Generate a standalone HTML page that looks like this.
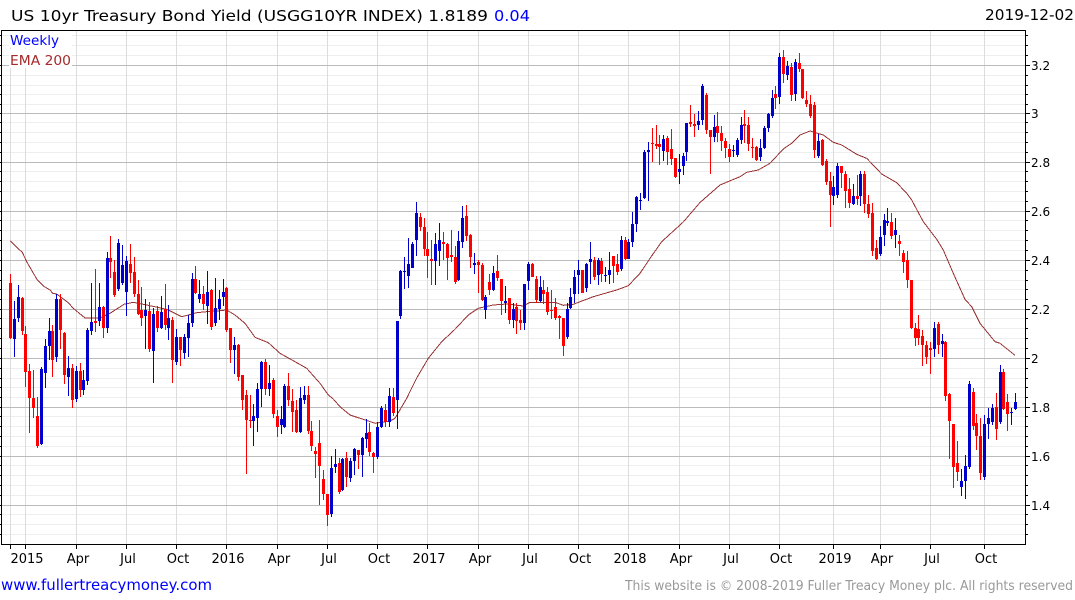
<!DOCTYPE html>
<html><head><meta charset="utf-8"><title>US 10yr Treasury Bond Yield</title>
<style>html,body{margin:0;padding:0;background:#fff}svg{display:block}text{font-family:"DejaVu Sans",sans-serif}</style></head>
<body>
<svg xmlns="http://www.w3.org/2000/svg" width="1075" height="600" viewBox="0 0 1075 600">
<rect width="1075" height="600" fill="#fff"/>
<g shape-rendering="crispEdges" fill="none" stroke-width="1">
<path stroke="#eee" d="M2 35.5H1025M2 45.5H1025M2 55.5H1025M2 75.5H1025M2 85.5H1025M2 94.5H1025M2 104.5H1025M2 122.5H1025M2 132.5H1025M2 142.5H1025M2 152.5H1025M2 171.5H1025M2 181.5H1025M2 191.5H1025M2 201.5H1025M2 220.5H1025M2 230.5H1025M2 240.5H1025M2 250.5H1025M2 270.5H1025M2 280.5H1025M2 289.5H1025M2 299.5H1025M2 318.5H1025M2 328.5H1025M2 338.5H1025M2 348.5H1025M2 368.5H1025M2 378.5H1025M2 387.5H1025M2 397.5H1025M2 416.5H1025M2 426.5H1025M2 436.5H1025M2 446.5H1025M2 465.5H1025M2 475.5H1025M2 485.5H1025M2 495.5H1025M2 514.5H1025M2 524.5H1025M2 534.5H1025"/>
<path stroke="#ddd" d="M10.5 31V544M25.5 31V544M76.5 31V544M126.5 31V544M176.5 31V544M226.5 31V544M277.5 31V544M327.5 31V544M377.5 31V544M427.5 31V544M478.5 31V544M528.5 31V544M578.5 31V544M628.5 31V544M679.5 31V544M729.5 31V544M779.5 31V544M833.5 31V544M880.5 31V544M930.5 31V544M984.5 31V544"/>
<path stroke="#bbb" d="M2 65.5H1025M2 113.5H1025M2 162.5H1025M2 211.5H1025M2 260.5H1025M2 309.5H1025M2 358.5H1025M2 407.5H1025M2 456.5H1025M2 505.5H1025"/>
</g>
<rect x="9" y="31" width="63" height="16.5" fill="#fff"/>
<rect x="9" y="49" width="63" height="19" fill="#fff"/>
<path fill="none" stroke="#993333" stroke-width="1" shape-rendering="crispEdges" d="M10.3 241L16.7 247.3L22.3 252.3L26.7 261.7L37.3 280L43.3 286L50 290L52.7 293.3L56.7 294L63.3 299L68.3 302.7L73.3 308.3L85 318L100 318L110 313.3L124 304.3L133.3 302.3L146.7 305L166.7 309.3L181.7 316.7L188.3 315L196.7 312.7L206.7 311.7L216.7 311L226.7 310L235 315L245 323.3L255 337.3L268.3 342.7L280 353.3L295 361.7L306.7 368.3L320 383.3L328.3 395L333.3 399L340 406.7L350 415L360 418.3L375 423.3L390 421L395 418.3L406.7 398.3L416.7 378L428.3 358.3L441.7 341.7L455 329.3L468.3 315L478.3 308.3L493.3 305L506.7 304L523.3 306L530 302.3L555 302.3L563.3 305.3L573.3 304.3L593.3 296.7L616.7 290L628.3 285.7L640 273.3L650 258.3L661.7 241.7L683.3 222L700 202.5L720 185L740 176.7L746.7 172.3L758.3 170L770 163.3L783.3 149L791.7 143.3L800 135L810 131L823.3 135L833.3 142.3L841.7 145L856.7 154.3L866.7 158.3L881.7 174L896.7 182.7L906.7 193.3L911.7 200L923.3 221.7L936.7 239.3L943.3 250L953.3 273.3L965 299.3L971.7 306.7L980 323.3L995 341.7L1000 343.3L1015 355.3"/>
<g shape-rendering="crispEdges" fill="none">
<path stroke="#ff0000" stroke-width="1" d="M10.5 274V339M22.5 297V335M25.5 326V387M29.5 364V433M33.5 370V418M37.5 397V448M52.5 325V377M60.5 294V349M64.5 332V384M72.5 364V408M80.5 363V397M95.5 269V332M103.5 306V338M110.5 236V278M114.5 260V297M130.5 244V283M134.5 257V297M138.5 280V315M141.5 287V326M149.5 302V352M157.5 306V332M165.5 284V330M172.5 317V383M180.5 337V366M195.5 266V294M203.5 286V310M211.5 289V330M226.5 287V332M230.5 328V363M238.5 344V381M242.5 375V410M246.5 390V474M250.5 395V428M265.5 359V395M273.5 378V418M277.5 410V437M288.5 373V406M292.5 389V432M296.5 400V433M308.5 386V434M311.5 421V451M315.5 447V478M319.5 420V505M323.5 470V500M327.5 494V526M339.5 458V494M346.5 452V487M358.5 450V469M369.5 423V456M373.5 452V473M385.5 404V427M393.5 388V416M420.5 213V231M424.5 218V256M427.5 232V278M431.5 240V285M443.5 232V260M447.5 243V280M451.5 230V262M455.5 246V284M466.5 205V241M470.5 234V268M478.5 260V293M482.5 263V301M489.5 274V295M497.5 255V281M501.5 279V315M509.5 298V324M516.5 303V334M520.5 310V330M532.5 263V277M536.5 276V303M543.5 280V304M547.5 287V315M551.5 290V319M555.5 298V320M559.5 315V339M563.5 318V356M582.5 270V293M594.5 257V280M601.5 258V282M613.5 256V283M617.5 254V275M625.5 237V260M652.5 128V162M656.5 125V149M659.5 135V165M667.5 136V165M671.5 129V165M675.5 158V178M690.5 105V127M694.5 114V137M706.5 93V134M710.5 130V174M717.5 112V142M721.5 126V151M725.5 138V158M729.5 144V162M744.5 110V143M748.5 117V151M752.5 138V158M756.5 146V161M775.5 86V109M783.5 50V83M791.5 63V101M799.5 53V72M802.5 69V99M806.5 91V107M810.5 95V118M814.5 102V158M822.5 139V166M826.5 159V185M830.5 172V227M841.5 166V188M845.5 171V208M849.5 178V208M857.5 175V205M864.5 171V213M868.5 195V218M872.5 203V256M876.5 240V260M891.5 213V239M899.5 235V256M903.5 250V273M907.5 251V288M911.5 280V329M915.5 323V346M918.5 315V345M922.5 330V366M926.5 341V364M930.5 342V374M938.5 322V354M945.5 341V401M949.5 393V459M953.5 424V488M957.5 441V481M973.5 388V430M976.5 414V450M980.5 418V480M996.5 393V440M1003.5 369V410M1007.5 394V431"/>
<path stroke="#0000cc" stroke-width="1" d="M14.5 301V357M18.5 285V322M41.5 367V445M45.5 339V388M49.5 318V360M56.5 294V362M68.5 356V396M76.5 366V402M83.5 370V395M87.5 328V385M91.5 283V335M99.5 283V326M107.5 252V333M118.5 239V291M122.5 245V285M126.5 256V316M145.5 299V349M153.5 308V383M161.5 296V329M168.5 305V340M176.5 329V365M184.5 334V359M188.5 315V357M192.5 273V327M199.5 280V303M207.5 271V324M215.5 278V326M219.5 290V320M223.5 279V306M234.5 337V374M253.5 404V446M257.5 383V432M261.5 361V407M269.5 365V396M281.5 406V434M284.5 384V428M300.5 387V433M304.5 386V404M331.5 456V517M335.5 449V473M342.5 458V491M350.5 458V482M354.5 448V475M362.5 437V477M366.5 419V448M377.5 422V459M381.5 406V428M389.5 388V427M397.5 321V429M400.5 270V319M404.5 257V289M408.5 238V288M412.5 242V268M416.5 202V256M435.5 233V285M439.5 223V266M458.5 231V281M462.5 206V248M474.5 253V274M485.5 295V319M493.5 266V291M505.5 286V313M513.5 303V328M524.5 284V330M528.5 262V290M540.5 276V302M567.5 303V339M570.5 288V309M574.5 270V303M578.5 260V294M586.5 263V292M590.5 242V284M598.5 258V285M605.5 267V282M609.5 252V284M621.5 236V271M628.5 239V259M632.5 212V247M636.5 196V232M640.5 193V210M644.5 150V199M648.5 142V201M663.5 135V161M679.5 154V184M683.5 153V175M686.5 123V161M698.5 111V130M702.5 84V125M714.5 115V142M733.5 145V157M737.5 138V157M741.5 117V144M760.5 139V161M764.5 126V149M768.5 113V132M772.5 90V118M779.5 53V104M787.5 61V80M795.5 59V101M818.5 134V158M833.5 176V205M837.5 163V198M853.5 184V205M860.5 171V206M880.5 226V256M884.5 214V246M887.5 208V226M895.5 218V248M934.5 322V357M942.5 334V357M961.5 469V496M965.5 455V499M969.5 381V469M984.5 415V480M988.5 408V439M992.5 404V425M1000.5 365V424M1011.5 408V425M1015.5 393V410"/>
<path stroke="#ff0000" stroke-width="3" d="M10.5 283V338M22.5 298V331M25.5 334V372M29.5 371V398M33.5 398V408M37.5 416V446M52.5 331V360M60.5 299V330M64.5 333V375M72.5 368V400M80.5 371V390M95.5 321V323M103.5 307V328M110.5 258V262M114.5 272V295M130.5 264V273M134.5 272V294M138.5 294V314M141.5 310V318M149.5 311V349M157.5 311V328M165.5 309V325M172.5 320V360M180.5 337V350M195.5 279V293M203.5 294V304M211.5 290V327M226.5 288V330M230.5 328V350M238.5 345V377M242.5 375V400M246.5 395V420M250.5 420V421M265.5 362V389M273.5 380V414M277.5 416V427M288.5 386V400M292.5 401V412M296.5 410V432M308.5 395V431M311.5 431V446M315.5 451V454M319.5 443V466M323.5 479V494M327.5 494V515M339.5 463V492M346.5 458V477M358.5 450V455M369.5 432V452M373.5 453V457M385.5 410V422M393.5 397V413M420.5 217V227M424.5 227V249M427.5 249V256M431.5 259V261M443.5 242V244M447.5 244V258M451.5 255V257M455.5 257V282M466.5 216V236M470.5 235V257M478.5 262V265M482.5 265V300M489.5 282V290M497.5 271V278M501.5 279V301M509.5 298V320M516.5 307V321M520.5 320V323M532.5 264V277M536.5 279V300M543.5 290V294M547.5 292V312M551.5 310V311M555.5 307V318M559.5 316V318M563.5 318V346M582.5 270V293M594.5 260V277M601.5 261V274M613.5 256V266M617.5 264V272M625.5 240V259M652.5 143V144M656.5 144V146M659.5 144V147M667.5 138V152M671.5 149V159M675.5 158V177M690.5 122V124M694.5 124V126M706.5 95V130M710.5 130V137M717.5 126V133M721.5 133V141M725.5 141V148M729.5 149V157M744.5 124V126M748.5 125V144M752.5 147V148M756.5 147V160M775.5 94V98M783.5 57V74M791.5 67V95M799.5 63V69M802.5 69V98M806.5 100V104M810.5 104V116M814.5 105V150M822.5 140V165M826.5 161V182M830.5 181V195M841.5 166V173M845.5 174V191M849.5 189V203M857.5 196V199M864.5 174V204M868.5 204V214M872.5 213V251M876.5 248V259M891.5 222V236M899.5 241V244M903.5 253V262M907.5 260V280M911.5 280V328M915.5 328V338M918.5 329V338M922.5 336V345M926.5 345V357M930.5 348V350M938.5 324V345M945.5 342V396M949.5 394V421M953.5 424V467M957.5 463V472M973.5 392V426M976.5 423V436M980.5 436V473M996.5 407V429M1003.5 372V409M1007.5 402V414"/>
<path stroke="#0000cc" stroke-width="3" d="M14.5 319V339M18.5 297V318M41.5 369V444M45.5 346V373M49.5 331V346M56.5 299V357M68.5 368V377M76.5 371V399M83.5 380V390M87.5 330V381M91.5 322V331M99.5 307V321M107.5 258V328M118.5 243V289M122.5 265V283M126.5 261V292M145.5 310V316M153.5 314V351M161.5 312V328M168.5 318V328M176.5 337V362M184.5 337V353M188.5 323V338M192.5 279V323M199.5 294V299M207.5 292V306M215.5 308V323M219.5 299V309M223.5 292V297M234.5 345V350M253.5 416V421M257.5 389V418M261.5 362V389M269.5 383V389M281.5 419V425M284.5 386V427M300.5 398V432M304.5 395V400M331.5 468V514M335.5 464V467M342.5 459V490M350.5 461V478M354.5 449V461M362.5 438V455M366.5 433V439M377.5 427V457M381.5 408V427M389.5 396V422M397.5 321V400M400.5 271V316M404.5 271V272M408.5 264V276M412.5 244V268M416.5 213V240M435.5 244V261M439.5 240V251M458.5 241V280M462.5 218V242M474.5 263V265M485.5 297V310M493.5 273V290M505.5 301V303M513.5 309V320M524.5 284V323M528.5 264V281M540.5 287V301M567.5 309V337M570.5 297V308M574.5 277V294M578.5 270V275M586.5 264V288M590.5 259V262M598.5 260V275M605.5 275V276M609.5 270V275M621.5 240V269M628.5 242V259M632.5 224V242M636.5 197V224M640.5 200V201M644.5 152V198M648.5 150V152M663.5 139V151M679.5 169V172M683.5 156V166M686.5 123V152M698.5 121V125M702.5 86V120M714.5 127V137M733.5 150V151M737.5 140V155M741.5 125V140M760.5 148V157M764.5 128V148M768.5 114V128M772.5 98V116M779.5 57V97M787.5 66V75M795.5 62V94M818.5 141V156M833.5 187V196M837.5 166V195M853.5 196V204M860.5 174V196M880.5 237V254M884.5 220V235M887.5 221V223M895.5 230V235M934.5 328V349M942.5 341V344M961.5 481V487M965.5 466V481M969.5 384V467M984.5 424V477M988.5 418V424M992.5 408V422M1000.5 372V422M1011.5 412V413M1015.5 402V409"/>
</g>
<g shape-rendering="crispEdges" fill="none" stroke="#000" stroke-width="1">
<path d="M1 30.5H1026M1.5 30V545M1 544.5H1026M1025.5 30V545"/>
<path d="M0 35.5H2M0 45.5H2M0 55.5H2M0 65.5H2M0 75.5H2M0 85.5H2M0 94.5H2M0 104.5H2M0 113.5H2M0 122.5H2M0 132.5H2M0 142.5H2M0 152.5H2M0 162.5H2M0 171.5H2M0 181.5H2M0 191.5H2M0 201.5H2M0 211.5H2M0 220.5H2M0 230.5H2M0 240.5H2M0 250.5H2M0 260.5H2M0 270.5H2M0 280.5H2M0 289.5H2M0 299.5H2M0 309.5H2M0 318.5H2M0 328.5H2M0 338.5H2M0 348.5H2M0 358.5H2M0 368.5H2M0 378.5H2M0 387.5H2M0 397.5H2M0 407.5H2M0 416.5H2M0 426.5H2M0 436.5H2M0 446.5H2M0 456.5H2M0 465.5H2M0 475.5H2M0 485.5H2M0 495.5H2M0 505.5H2M0 514.5H2M0 524.5H2M0 534.5H2"/>
<path d="M1026 35.5H1028M1026 45.5H1028M1026 55.5H1028M1026 65.5H1030M1026 75.5H1028M1026 85.5H1028M1026 94.5H1028M1026 104.5H1028M1026 113.5H1030M1026 122.5H1028M1026 132.5H1028M1026 142.5H1028M1026 152.5H1028M1026 162.5H1030M1026 171.5H1028M1026 181.5H1028M1026 191.5H1028M1026 201.5H1028M1026 211.5H1030M1026 220.5H1028M1026 230.5H1028M1026 240.5H1028M1026 250.5H1028M1026 260.5H1030M1026 270.5H1028M1026 280.5H1028M1026 289.5H1028M1026 299.5H1028M1026 309.5H1030M1026 318.5H1028M1026 328.5H1028M1026 338.5H1028M1026 348.5H1028M1026 358.5H1030M1026 368.5H1028M1026 378.5H1028M1026 387.5H1028M1026 397.5H1028M1026 407.5H1030M1026 416.5H1028M1026 426.5H1028M1026 436.5H1028M1026 446.5H1028M1026 456.5H1030M1026 465.5H1028M1026 475.5H1028M1026 485.5H1028M1026 495.5H1028M1026 505.5H1030M1026 514.5H1028M1026 524.5H1028M1026 534.5H1028"/>
<path d="M10.5 545V549M25.5 545V549M76.5 545V549M126.5 545V549M176.5 545V549M226.5 545V549M277.5 545V549M327.5 545V549M377.5 545V549M427.5 545V549M478.5 545V549M528.5 545V549M578.5 545V549M628.5 545V549M679.5 545V549M729.5 545V549M779.5 545V549M833.5 545V549M880.5 545V549M930.5 545V549M984.5 545V549"/>
</g>
<text x="11" y="21" font-size="15" fill="#000" textLength="477" lengthAdjust="spacingAndGlyphs">US 10yr Treasury Bond Yield (USGG10YR INDEX) 1.8189</text>
<text x="494" y="21" font-size="15" fill="#0000ff" textLength="36" lengthAdjust="spacingAndGlyphs">0.04</text>
<text x="985" y="20" font-size="15" fill="#000" textLength="89" lengthAdjust="spacingAndGlyphs">2019-12-02</text>
<text x="10" y="45" font-size="13" fill="#0000ff" textLength="49" lengthAdjust="spacingAndGlyphs">Weekly</text>
<text x="10" y="65" font-size="13" fill="#a52a2a" textLength="61" lengthAdjust="spacingAndGlyphs">EMA 200</text>
<g font-size="12" fill="#000">
<text x="1031" y="70">3.2</text><text x="1031" y="118">3</text><text x="1031" y="167">2.8</text><text x="1031" y="216">2.6</text><text x="1031" y="265">2.4</text><text x="1031" y="314">2.2</text><text x="1031" y="363">2</text><text x="1031" y="412">1.8</text><text x="1031" y="461">1.6</text><text x="1031" y="510">1.4</text>
</g>
<g font-size="13" fill="#000" text-anchor="middle">
<text x="27" y="563">2015</text><text x="78" y="563">Apr</text><text x="128" y="563">Jul</text><text x="178" y="563">Oct</text><text x="228" y="563">2016</text><text x="279" y="563">Apr</text><text x="329" y="563">Jul</text><text x="379" y="563">Oct</text><text x="429" y="563">2017</text><text x="480" y="563">Apr</text><text x="530" y="563">Jul</text><text x="580" y="563">Oct</text><text x="630" y="563">2018</text><text x="681" y="563">Apr</text><text x="731" y="563">Jul</text><text x="781" y="563">Oct</text><text x="835" y="563">2019</text><text x="882" y="563">Apr</text><text x="932" y="563">Jul</text><text x="986" y="563">Oct</text>
</g>
<text x="1" y="590" font-size="15" fill="#0000ff" textLength="211" lengthAdjust="spacingAndGlyphs">www.fullertreacymoney.com</text>
<text x="625" y="590" font-size="13" fill="#999" textLength="448" lengthAdjust="spacingAndGlyphs">This website is © 2008-2019 Fuller Treacy Money plc. All rights reserved</text>
</svg>
</body></html>
